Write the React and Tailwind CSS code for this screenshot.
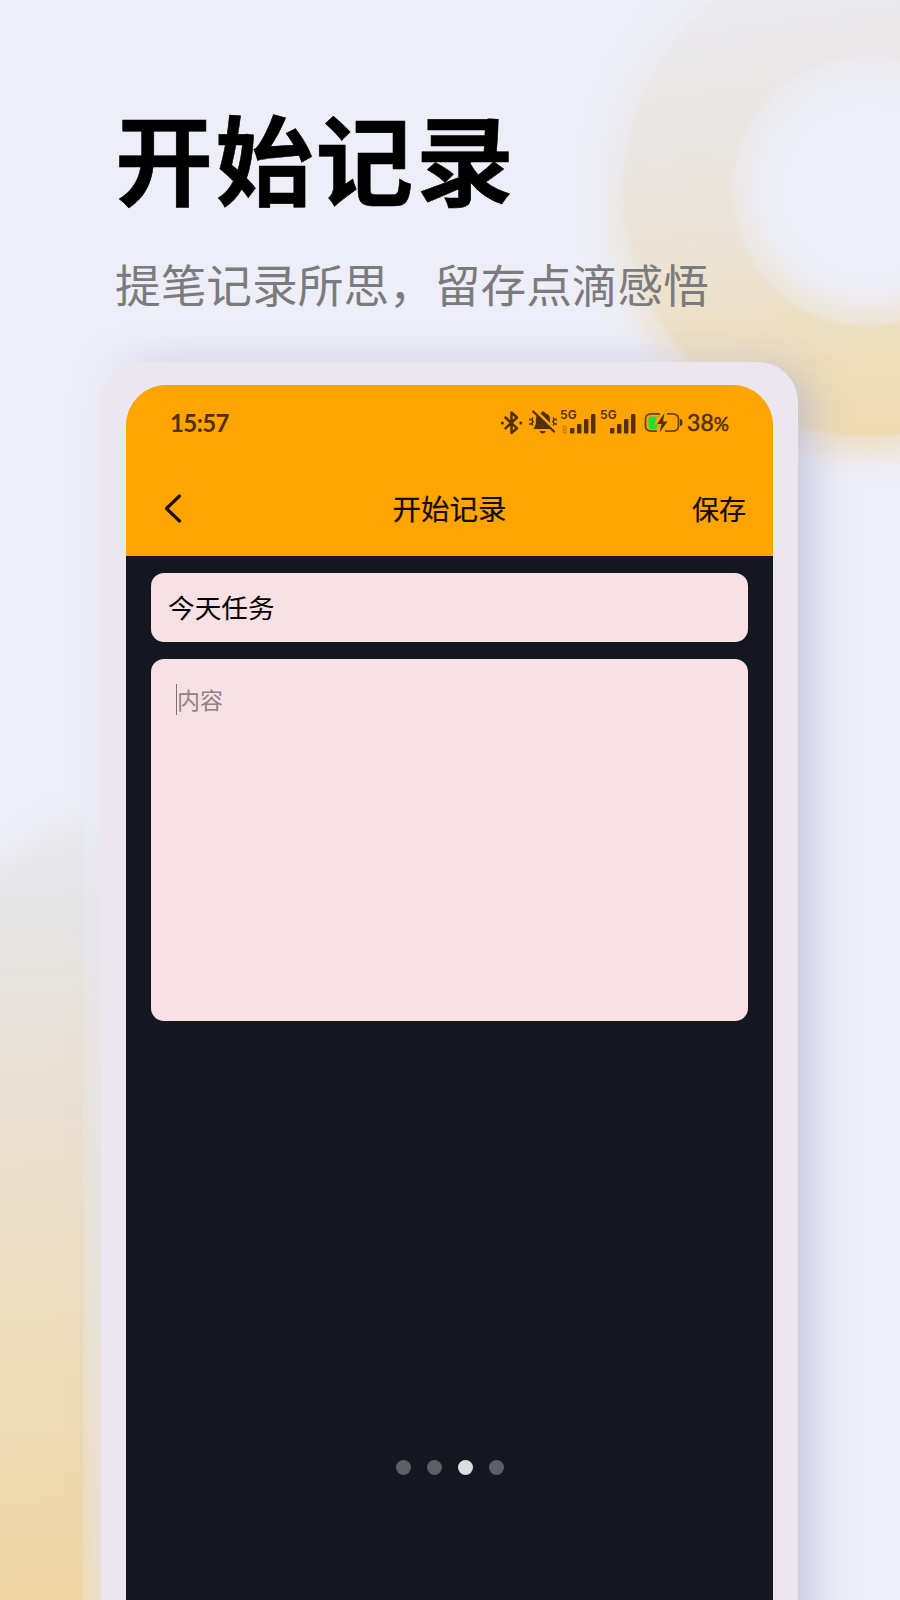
import React from "react";

function Backdrop() {
  return (
    <svg className="absolute inset-0" width="900" height="1600" viewBox="0 0 900 1600" aria-hidden="true">
      <defs>
        <linearGradient id="ring" gradientUnits="userSpaceOnUse" x1="800" y1="-60" x2="870" y2="440">
          <stop offset="0" stopColor="#e8e4e4" stopOpacity="0.2" />
          <stop offset="0.35" stopColor="#e9e4de" stopOpacity="0.8" />
          <stop offset="0.6" stopColor="#ebe2cf" />
          <stop offset="0.85" stopColor="#efdcb2" />
          <stop offset="1" stopColor="#efd8a8" />
        </linearGradient>
        <linearGradient id="side" gradientUnits="userSpaceOnUse" x1="10" y1="800" x2="70" y2="1600">
          <stop offset="0" stopColor="#e6e5ea" stopOpacity="0.2" />
          <stop offset="0.16" stopColor="#e6e5e5" />
          <stop offset="0.35" stopColor="#eae1d5" />
          <stop offset="0.7" stopColor="#ecdcb9" />
          <stop offset="1" stopColor="#efd6a2" />
        </linearGradient>
        <filter id="soft" filterUnits="userSpaceOnUse" x="500" y="-200" width="800" height="800">
          <feGaussianBlur stdDeviation="13" />
        </filter>
        <filter id="edge" filterUnits="userSpaceOnUse" x="500" y="-200" width="800" height="800">
          <feGaussianBlur stdDeviation="1.5" />
        </filter>
        <filter id="fade" x="-20%" y="-20%" width="140%" height="140%">
          <feGaussianBlur stdDeviation="12" />
        </filter>
        <clipPath id="band">
          <rect x="0" y="700" width="83" height="900" />
        </clipPath>
      </defs>
      <circle cx="868" cy="191" r="190" fill="none" stroke="url(#ring)" strokeWidth="148" filter="url(#soft)" opacity="0.6" />
      <circle cx="868" cy="191" r="190" fill="none" stroke="url(#ring)" strokeWidth="110" filter="url(#edge)" opacity="0.75" />
      <path d="M-40 900 L50 826 Q82 806 92 830 L108 860 L108 1660 L-40 1660Z" fill="url(#side)" filter="url(#fade)" opacity="0.75" />
      <g clipPath="url(#band)">
        <path d="M-40 900 L50 828 Q82 806 120 826 L120 1660 L-40 1660Z" fill="url(#side)" filter="url(#fade)" />
      </g>
    </svg>
  );
}

function Bluetooth() {
  return (
    <svg className="h-[26px] w-[24px]" viewBox="0 0 24 26" fill="none" stroke="#51300a" strokeWidth="2.5" strokeLinejoin="round" strokeLinecap="round">
      <path d="M5.500 7.500 17 18.300 11.500 23V2.500L17 7.500 5.500 18.300" />
      <path d="M2.300 13h.1M20.800 13h.1" strokeWidth="3" />
    </svg>
  );
}

function Muted() {
  return (
    <svg className="h-[26px] w-[28px]" viewBox="0 0 28 26" fill="none">
      <path d="M14 1.500c1 0 1.800.6 2 1.500 3.400.8 5.100 3.200 5.100 6.600v4.200l2.400 5.200H4.500l2.400-5.200v-4.200c0-3.400 1.700-5.800 5.100-6.600.2-.9 1-1.500 2-1.500Z" fill="#51300a" />
      <path d="M10.500 21h6.400c-.5 1.600-1.600 2.500-3.200 2.500s-2.700-.9-3.200-2.500Z" fill="#51300a" />
      <path d="M6.200.2 27 20.800" stroke="#ffa400" strokeWidth="3" />
      <path d="M4.200 1.500 25 21.500" stroke="#51300a" strokeWidth="2.200" strokeLinecap="round" />
      <path d="m3.800 7.500-1 2 1.200 2-1.200 2 1 2M1 8.500v2M1 13v2M24.200 7.500l1 2-1.200 2 1.200 2-1 2M27 8.500v2M27 13v2" stroke="#51300a" strokeWidth="1.600" />
    </svg>
  );
}

function Signal({ dual }) {
  return (
    <div className="relative h-[26px] w-[36px]">
      <span className="absolute -top-[1px] -left-[1px] font-[Inter,sans-serif] text-[12px] leading-[12px] font-semibold text-[#51300a]">5G</span>
      <svg className="h-[26px] w-[36px]" viewBox="0 0 36 26" fill="#51300a">
        <rect x="9" y="18" width="4.400" height="5.500" rx="1" />
        <rect x="16" y="14" width="4.400" height="9.500" rx="1" />
        <rect x="23" y="9" width="4.400" height="14.500" rx="1" />
        <rect x="30" y="4" width="4.400" height="19.500" rx="1" />
        {dual && (
          <g fill="none" stroke="#c77d08" strokeWidth="1.300">
            <circle cx="3.700" cy="17.500" r="1.600" />
            <circle cx="3.700" cy="21.500" r="1.600" />
          </g>
        )}
      </svg>
    </div>
  );
}

function Battery() {
  return (
    <svg className="h-[22px] w-[40px]" viewBox="0 0 40 22" fill="none">
      <path d="M4.500 6Q5 4.500 8 4.500h5.500l-3.500 8h4.500L12.500 17H8Q4.500 17 4.500 14Z" fill="#1fdc3c" />
      <path d="M16 1.800H8Q1.500 1.800 1.500 7v7q0 5.200 6.500 5.200h5M23 1.800h5q6.500 0 6.500 5.200v7q0 5.200-6.500 5.200h-7" stroke="#6b4208" strokeWidth="1.800" />
      <path d="M36 7q2.500 0 2.500 3.500T36 14Z" fill="#51300a" />
      <path d="m20.500 1-7.500 11h4.500l-2 8.500 8-11h-4.500Z" fill="#51300a" />
    </svg>
  );
}

function StatusBar() {
  return (
    <div className="flex h-[76px] items-center justify-between pr-[44px] pl-[44px] text-[#51300a]">
      <span className="font-[Lato,sans-serif] text-[24px] leading-none font-bold tracking-[-0.6px]">15:57</span>
      <div className="flex items-center">
        <Bluetooth />
        <div className="ml-[5px]"><Muted /></div>
        <div className="ml-[4px]"><Signal dual /></div>
        <div className="ml-[4px]"><Signal /></div>
        <div className="ml-[7px]"><Battery /></div>
        <span className="ml-[3px] -translate-y-px font-[Lato,sans-serif] text-[23px] leading-none font-normal [-webkit-text-stroke:0.5px_#51300a]">
          38<span className="text-[19px]">%</span>
        </span>
      </div>
    </div>
  );
}

function NavBar() {
  return (
    <div className="grid h-[95px] grid-cols-[1fr_auto_1fr] items-center pr-[27px] pl-[27px] text-[#140a00]">
      <svg className="ml-[10px] h-[30px] w-[20px] -translate-y-px" viewBox="0 0 20 30" fill="none" stroke="#210f00" strokeWidth="3.200" strokeLinecap="round" strokeLinejoin="round">
        <path d="M16.500 3 3.500 15.500 16.500 28" />
      </svg>
      <span className="text-center text-[28.500px] leading-none font-normal whitespace-nowrap [-webkit-text-stroke:0.2px_#140a00]">开始记录</span>
      <span className="text-right text-[27px] leading-none font-normal [-webkit-text-stroke:0.2px_#140a00]">保存</span>
    </div>
  );
}

function Dots() {
  return (
    <div className="absolute top-[1460px] left-[396px] flex gap-[16px]">
      {[0, 1, 2, 3].map((i) => (
        <span key={i} className={i === 2 ? "size-[15px] rounded-full bg-[#dcdfe1]" : "size-[15px] rounded-full bg-[#5e6068]"} />
      ))}
    </div>
  );
}

export default function App() {
  return (
    <div className="relative h-[1600px] w-[900px] overflow-hidden bg-[#edeef7] font-['Noto_Sans_CJK_SC',sans-serif]">
      <Backdrop />
      <header className="relative h-[362px] pt-[105px] pl-[115px]">
        <h1 className="text-[98px] leading-[100px] font-bold tracking-[2.3px] whitespace-nowrap text-black [-webkit-text-stroke:0.6px_#000]">开始记录</h1>
        <p className="mt-[54px] text-[45.700px] leading-[48px] font-normal whitespace-nowrap text-[#7b7b7d]">提笔记录所思，留存点滴感悟</p>
      </header>
      <main className="relative ml-[101px] h-[1300px] w-[697px] rounded-t-[40px] bg-[#eae7ef] px-[25px] pt-[23px] shadow-[-10px_0_16px_rgba(255,255,255,0.2),14px_4px_38px_rgba(173,173,210,0.6)]">
        <div className="h-full overflow-hidden rounded-t-[41px] bg-[linear-gradient(#ffa400_100px,#141620_100px)]">
          <div className="bg-[#ffa400]">
            <StatusBar />
            <NavBar />
          </div>
          <div className="flex flex-col gap-[17px] px-[25px] pt-[17px]">
            <div className="flex h-[69px] items-center rounded-[13px] bg-[#f9e0e4] pl-[17px] text-[26.700px] leading-none text-black">今天任务</div>
            <div className="flex h-[362px] items-start rounded-[13px] bg-[#f9e0e4] pt-[25px] pl-[25px] text-[23px] text-[#8d8285]">
              <div className="flex h-[31px] items-center border-l border-[#777074] leading-none">内容</div>
            </div>
          </div>
        </div>
      </main>
      <Dots />
    </div>
  );
}
